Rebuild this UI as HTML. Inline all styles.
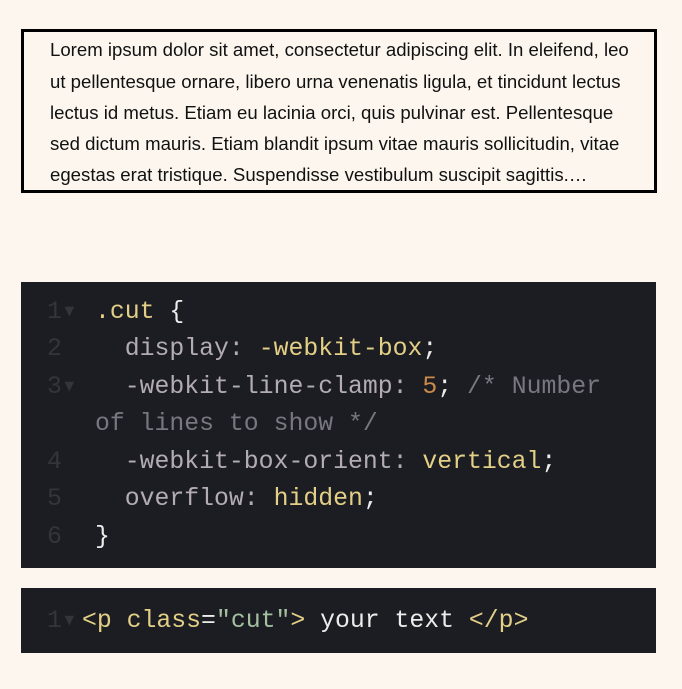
<!DOCTYPE html>
<html><head><meta charset="utf-8"><style>
body{margin:0;width:682px;height:689px;background:#fcf6ef;position:relative;overflow:hidden}
.box{position:absolute;left:21px;top:29px;width:630px;height:158px;border:3px solid #000;background:#fcf6ef}
.box div{position:absolute;left:26px;font:18.6px/22px "Liberation Sans",sans-serif;color:#111;white-space:nowrap}
.code{position:absolute;left:21px;width:635px;background:#1c1d23;font-family:"Liberation Mono",monospace;font-size:24.8px;color:#b3acb4}
.code .l{position:absolute;white-space:pre;line-height:30px}
.n{position:absolute;left:26px;color:#34343a;white-space:pre;line-height:30px}
.y{color:#e3cf85}.w{color:#ececec}.o{color:#c98a4a}.c{color:#7a7681}.g{color:#a3c0a0}
</style></head><body>
<div class="box">
<div style="top:7px">Lorem ipsum dolor sit amet, consectetur adipiscing elit. In eleifend, leo</div>
<div style="top:39px">ut pellentesque ornare, libero urna venenatis ligula, et tincidunt lectus</div>
<div style="top:70px">lectus id metus. Etiam eu lacinia orci, quis pulvinar est. Pellentesque</div>
<div style="top:101px">sed dictum mauris. Etiam blandit ipsum vitae mauris sollicitudin, vitae</div>
<div style="top:132px">egestas erat tristique. Suspendisse vestibulum suscipit sagittis.…</div>
</div>
<div class="code" style="top:282px;height:286px">
<div class="n" style="top:15px">1▾</div><div class="l" style="left:74px;top:15px"><span class="y">.cut</span> <span class="w">{</span></div>
<div class="n" style="top:52px">2</div><div class="l" style="left:74px;top:52px">  display: <span class="y">-webkit-box</span><span class="w">;</span></div>
<div class="n" style="top:90px">3▾</div><div class="l" style="left:74px;top:90px">  -webkit-line-clamp: <span class="o">5</span><span class="w">;</span> <span class="c">/* Number</span></div>
<div class="l" style="left:74px;top:127px"><span class="c">of lines to show */</span></div>
<div class="n" style="top:165px">4</div><div class="l" style="left:74px;top:165px">  -webkit-box-orient: <span class="y">vertical</span><span class="w">;</span></div>
<div class="n" style="top:202px">5</div><div class="l" style="left:74px;top:202px">  overflow: <span class="y">hidden</span><span class="w">;</span></div>
<div class="n" style="top:240px">6</div><div class="l" style="left:74px;top:240px"><span class="w">}</span></div>
</div>
<div class="code" style="top:588px;height:65px">
<div class="n" style="top:18px">1▾</div><div class="l" style="left:61px;top:18px"><span class="y">&lt;p class</span><span class="w">=</span><span class="g">"cut"</span><span class="y">&gt;</span><span class="w"> your text </span><span class="y">&lt;/p&gt;</span></div>
</div>
</body></html>
